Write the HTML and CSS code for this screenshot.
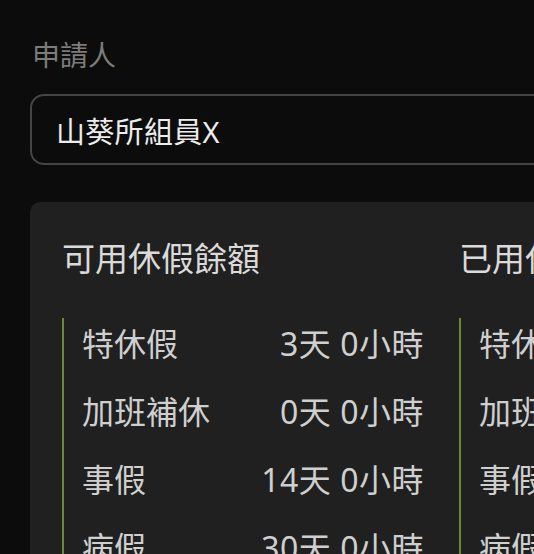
FILE: index.html
```html
<!DOCTYPE html>
<html lang="zh-Hant">
<head>
  <meta charset="UTF-8">
  <meta name="viewport" content="width=device-width, initial-scale=1">
  <title>請假申請</title>
  <link rel="stylesheet" href="styles.css">
</head>
<body>

<div class="page">
  <!-- Applicant -->
  <div class="field">
    <label class="field-label" for="applicant">申請人</label>
    <input type="text" id="applicant" class="field-input" value="山葵所組員X" readonly>
  </div>

  <!-- Leave summary -->
  <div class="summary-card">
    <div class="summary-col">
      <h3 class="summary-title">可用休假餘額</h3>
      <ul class="leave-list">
        <li class="leave-row"><span>特休假</span><span class="leave-value">3天 0小時</span></li>
        <li class="leave-row"><span>加班補休</span><span class="leave-value">0天 0小時</span></li>
        <li class="leave-row"><span>事假</span><span class="leave-value">14天 0小時</span></li>
        <li class="leave-row"><span>病假</span><span class="leave-value">30天 0小時</span></li>
      </ul>
    </div>
    <div class="summary-col">
      <h3 class="summary-title">已用休假時數</h3>
      <ul class="leave-list">
        <li class="leave-row"><span>特休假</span><span class="leave-value">0天 0小時</span></li>
        <li class="leave-row"><span>加班補休</span><span class="leave-value">0天 0小時</span></li>
        <li class="leave-row"><span>事假</span><span class="leave-value">0天 0小時</span></li>
        <li class="leave-row"><span>病假</span><span class="leave-value">0天 0小時</span></li>
      </ul>
    </div>
  </div>
</div>

</body>
</html>
```

FILE: styles.css
```css
html, body {
  margin: 0;
  overflow: hidden;
}

body {
  font-family: "Noto Sans", "Noto Sans CJK TC", sans-serif;
  background-color: #0c0c0c;
  color: #d8d8d8;
}

.page {
  width: 1100px;
  padding: 34px 0 0 30px;
}

.field {
  display: flex;
  flex-direction: column;
  gap: 18px;
  margin-bottom: 37px;
}

.field-label {
  font-size: 28px;
  line-height: 42px;
  color: #7c7c7c;
  padding-left: 2px;
}

.field-input {
  box-sizing: border-box;
  height: 71px;
  width: 100%;
  padding: 0 24px;
  font-family: inherit;
  font-size: 29px;
  letter-spacing: 0.3px;
  color: #ececec;
  background-color: #0c0c0c;
  border: 2px solid #454545;
  border-radius: 14px;
  outline: none;
}

.summary-card {
  display: grid;
  grid-template-columns: 365px 365px;
  gap: 32px;
  padding: 33px 32px;
  background-color: #202020;
  border-radius: 10px;
}

.summary-title {
  margin: 0 0 35px;
  font-size: 33px;
  font-weight: normal;
  line-height: 48px;
  color: #dadada;
}

.leave-list {
  list-style: none;
  margin: 0;
  padding: 2px 0 0 18px;
  border-left: 2px solid #6b8a37;
  display: flex;
  flex-direction: column;
  gap: 20px;
}

.leave-row {
  display: flex;
  justify-content: space-between;
  font-size: 32px;
  line-height: 48px;
  color: #cfcfcf;
}

.leave-value {
  letter-spacing: 0.5px;
  padding-right: 3px;
}
```
